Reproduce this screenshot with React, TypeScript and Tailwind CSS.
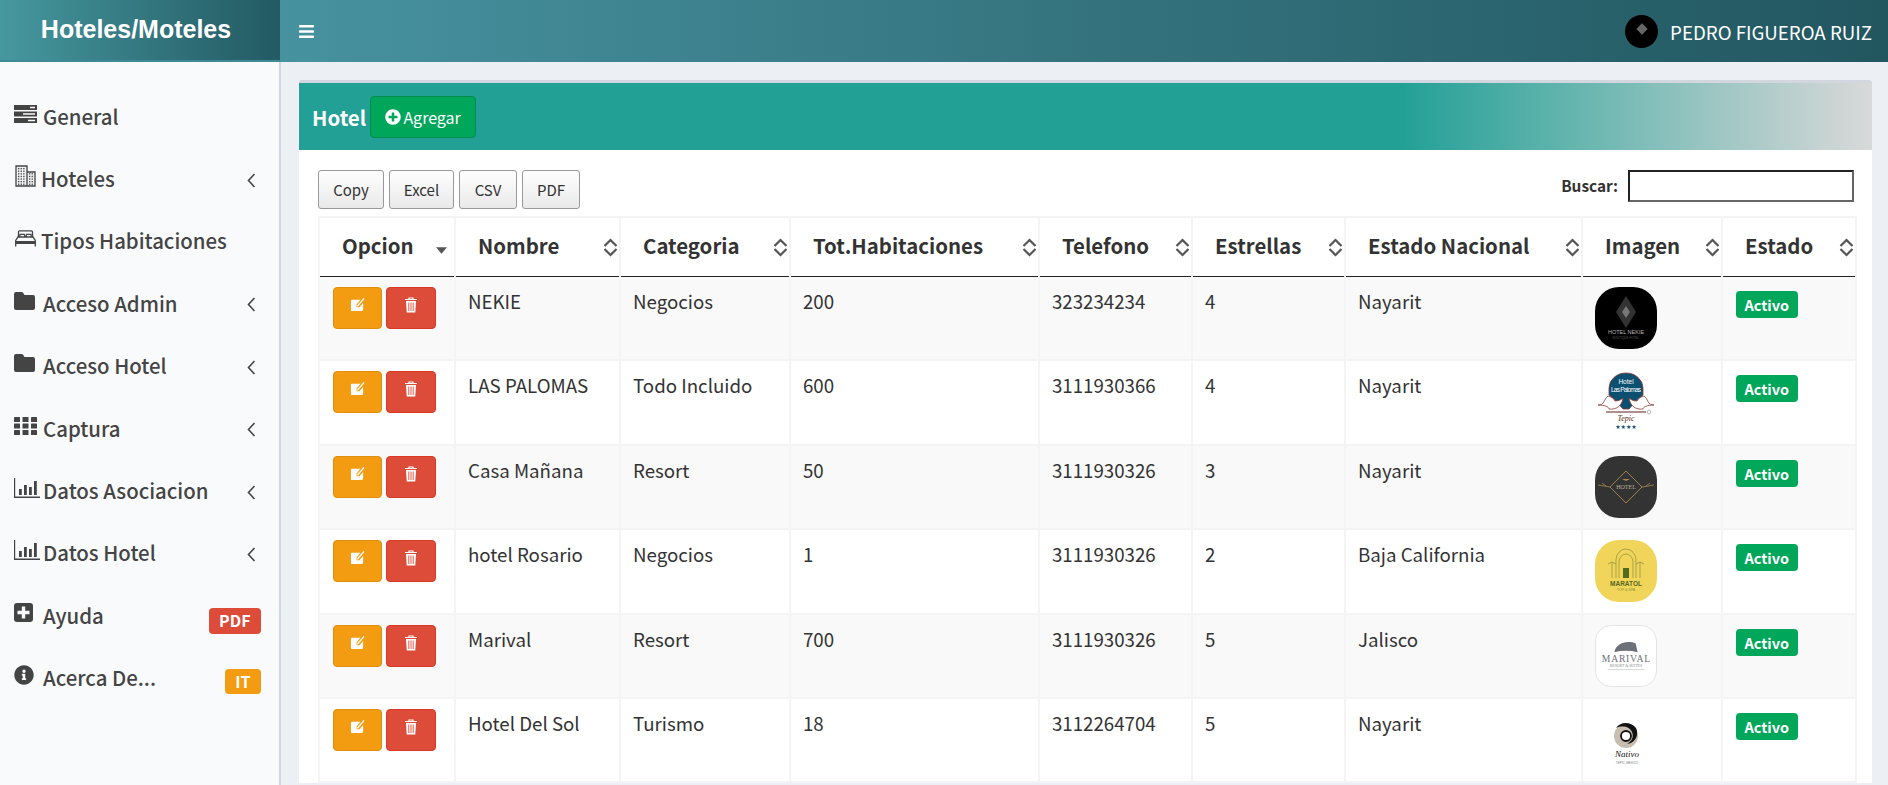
import { FaBars, FaInfoCircle, FaPlusCircle } from "react-icons/fa";
import type { ReactNode } from "react";

function ServerIcon() {
    return (
        <svg viewBox="0 0 23 18" className="h-[18px] w-[23px]" fill="#444">
            <path d="M0 0h23v5H0z" />
            <path d="M0 6.5h23v5H0z" />
            <path d="M0 13h23v5H0z" />
            <path d="M16 1.7h5v1.6h-5zM9 8.2h12v1.6H9zM14 14.7h7v1.6h-7z" fill="#f9fafc" />
        </svg>
    );
}

function BuildingIcon() {
    const dots = [];
    for (let y = 3; y < 19; y += 2.6) {
        for (const x of [3, 5.6, 8.2]) dots.push(<rect key={`a${x}${y}`} x={x} y={y} width="1.3" height="1.3" />);
        if (y > 8) for (const x of [14, 16.6]) dots.push(<rect key={`b${x}${y}`} x={x} y={y} width="1.3" height="1.3" />);
    }
    return (
        <svg viewBox="0 0 21 22" className="h-[22px] w-[21px]" fill="#444">
            <path d="M1 1h11v20H1zM12 7h8v14h-8z" fill="#eef0f2" stroke="#444" strokeWidth="1.3" />
            {dots}
        </svg>
    );
}

function BedIcon() {
    return (
        <svg viewBox="0 0 21 17" className="h-[17px] w-[21px]" fill="none" stroke="#444" strokeWidth="1.3">
            <path d="M3.5 7V2a1.2 1.2 0 0 1 1.2-1.2h11.6A1.2 1.2 0 0 1 17.500 2v5" />
            <path d="M4.500 7l.6-2.600h4.300l.6 2.600M11 7l.6-2.600h4.300l.6 2.600" />
            <path d="M.7 16.500v-6l2.300-3.500h15l2.300 3.500v6" />
            <path d="M.7 11h19.600v3H.7z" fill="#444" stroke="none" />
        </svg>
    );
}

function FolderIcon() {
    return (
        <svg viewBox="0 0 21 18" className="h-[18px] w-[21px]" fill="#444">
            <path d="M2 0h5.500a2 2 0 0 1 1.600.8L10.500 3H19a2 2 0 0 1 2 2v11a2 2 0 0 1-2 2H2a2 2 0 0 1-2-2V2a2 2 0 0 1 2-2z" />
        </svg>
    );
}

function GridIcon() {
    return (
        <svg viewBox="0 0 23 18" className="h-[18px] w-[23px]" fill="#444">
            {[0, 6.500, 13].map((y) =>
                [0, 8.500, 17].map((x) => <rect key={`${x}-${y}`} x={x} y={y} width="6" height="5" rx="0.6" />),
            )}
        </svg>
    );
}

function ChartIcon() {
    return (
        <svg viewBox="0 0 26 20" className="h-[20px] w-[26px]" fill="#444">
            <path d="M0 0h1.200v18.600H26V20H0z" />
            <path d="M5 11h2.800v6H5zM10 7h2.800v10H10zM15 9h2.800v8H15zM20 3h2.800v14H20z" />
        </svg>
    );
}

function PlusSquareIcon() {
    return (
        <svg viewBox="0 0 19 19" className="h-[19px] w-[19px]">
            <rect width="19" height="19" rx="3" fill="#444" />
            <path d="M7.800 3.500h3.400v4.300h4.300v3.400h-4.300v4.300H7.800v-4.300H3.500V7.800h4.300z" fill="#f9fafc" />
        </svg>
    );
}

function Chevron() {
    return (
        <svg viewBox="0 0 9 15" className="h-[15px] w-[9px]" fill="none" stroke="#444" strokeWidth="1.6">
            <path d="M7.500 1L1.500 7.500 7.500 14" />
        </svg>
    );
}

function EditIcon() {
    return (
        <svg viewBox="0 0 16 16" className="h-[15px] w-[15px]">
            <path d="M2 3h9L7 8v3h3l4-4.500V13a2 2 0 0 1-2 2H2a1 1 0 0 1-1-1V4a1 1 0 0 1 1-1z" fill="#fff" />
            <path d="M7.800 9.800L15 1.500" stroke="#fff" strokeWidth="1.500" />
        </svg>
    );
}

function TrashIcon() {
    return (
        <svg viewBox="0 0 14 16" className="h-[16px] w-[14px]">
            <path d="M1 2.500h12M5 2.500V1h4v1.500" stroke="#fff" strokeWidth="1.200" fill="none" />
            <path d="M2 4h10l-.7 11.500H2.700z" fill="#fff" />
            <path d="M4.800 5.500v8.500M7 5.500v8.500M9.200 5.500v8.500" stroke="#dd4b39" strokeWidth="0.9" />
        </svg>
    );
}

function SortIcon() {
    return (
        <svg viewBox="0 0 14 19" className="absolute right-[1.5px] top-[20px] h-[19px] w-[15px]" fill="none" stroke="#555" strokeWidth="2.200">
            <path d="M1 8L7 2l6 6M1 11l6 6 6-6" />
        </svg>
    );
}

function LogoNekie() {
    return (
        <svg viewBox="0 0 62 62" className="h-[62px] w-[62px] rounded-[24px] bg-black">
            <path d="M31 9l10 16-10 16-10-16z" fill="#333" />
            <path d="M31 19l4 6-4 6-4-6z" fill="#777" />
            <text x="31" y="47" textAnchor="middle" fontSize="5.500" fill="#b5b5b5" fontFamily="Liberation Sans">HOTEL NEKIE</text>
            <text x="31" y="52" textAnchor="middle" fontSize="3" fill="#555" fontFamily="Liberation Sans">BOUTIQUE HOTEL</text>
        </svg>
    );
}

function LogoPalomas() {
    return (
        <svg viewBox="0 0 62 62" className="h-[62px] w-[62px]">
            <path d="M14 24V17a17 15 0 0 1 34 0v7l-7 6-7 8h-6l-7-8z" fill="#0b4f71" stroke="#8c3a30" strokeWidth="0.800" />
            <text x="31" y="13" textAnchor="middle" fontSize="6.500" fill="#fff" fontFamily="Liberation Sans">Hotel</text>
            <text x="31" y="21" textAnchor="middle" fontSize="6.500" fill="#fff" fontFamily="Liberation Sans" textLength="30">Las Palomas</text>
            <path d="M3 34c7 0 5-5 10-9 4 1 6 3 7 5 3 0 6-1 8-3-1 8-7 12-14 11 0-2-4-4-11-4zM59 34c-7 0-5-5-10-9-4 1-6 3-7 5-3 0-6-1-8-3 1 8 7 12 14 11 0-2 4-4 11-4z" fill="#fff" stroke="#8c3a30" strokeWidth="0.800" />
            <path d="M11 41h40" stroke="#5a1e18" strokeWidth="1" />
            <circle cx="54" cy="41" r="1.800" fill="none" stroke="#888" strokeWidth="0.600" />
            <text x="31" y="50" textAnchor="middle" fontSize="8" fontStyle="italic" fill="#5a1e18" fontFamily="Liberation Serif">Tepic</text>
            <text x="31" y="58" textAnchor="middle" fontSize="6" fill="#0b4f71" fontFamily="DejaVu Sans">★★★★</text>
        </svg>
    );
}

function LogoCasa() {
    return (
        <svg viewBox="0 0 62 62" className="h-[62px] w-[62px] rounded-[24px] bg-[#333333]">
            <path d="M31 15l16 16-16 16-16-16z" fill="none" stroke="#a98a4f" strokeWidth="0.900" />
            <path d="M3 29l12 2M59 29l-12 2M7 27l4 3M55 27l-4 3" stroke="#a98a4f" strokeWidth="0.800" />
            <path d="M27 23h8l-4 2z" fill="#a98a4f" />
            <text x="31" y="33" textAnchor="middle" fontSize="6" fill="#b9b09a" fontFamily="Liberation Serif">HOTEL</text>
        </svg>
    );
}

function LogoMaratol() {
    return (
        <svg viewBox="0 0 62 62" className="h-[62px] w-[62px] rounded-[24px] bg-[#f1d55a]">
            <path d="M21 38V20a10 11 0 0 1 20 0v18M24 38V22a7 8 0 0 1 14 0v16" fill="none" stroke="#8a8f3d" strokeWidth="0.700" />
            <path d="M28 28h6v10h-6z" fill="#55691f" />
            <path d="M17 38V22M45 38V22M13 24l4-2 4 2M41 24l4-2 4 2" fill="none" stroke="#8a8f3d" strokeWidth="0.700" />
            <text x="31" y="46" textAnchor="middle" fontSize="6.500" fontWeight="700" fill="#55691f" fontFamily="Liberation Sans">MARATOL</text>
            <text x="31" y="51" textAnchor="middle" fontSize="3.500" fill="#8a8f3d" fontFamily="Liberation Sans">TOP &amp; SPA</text>
        </svg>
    );
}

function LogoMarival() {
    return (
        <svg viewBox="0 0 62 62" className="h-[62px] w-[62px] rounded-[16px] border border-[#e4e4e4] bg-white">
            <path d="M19 27c1-9 13-13 22-9l2 9c-8-2-16-2-24 0z" fill="#6c7078" />
            <text x="31" y="37" textAnchor="middle" fontSize="10" fill="#6c7078" fontFamily="Liberation Serif" textLength="50">MARIVAL</text>
            <text x="31" y="42" textAnchor="middle" fontSize="4" fill="#888" fontFamily="Liberation Serif">RESORT &amp; SUITES</text>
            <path d="M12 45h38" stroke="#ccc" strokeWidth="0.800" />
        </svg>
    );
}

function LogoNativo() {
    return (
        <svg viewBox="0 0 62 62" className="h-[62px] w-[62px]">
            <circle cx="31" cy="27" r="12" fill="#c9bdb0" />
            <path d="M21 19c5-7 15-6 20 0 3 6 0 15-9 16 5-3 7-7 5-12-2-5-9-7-16-4z" fill="#111" />
            <circle cx="31" cy="27" r="5" fill="#fff" stroke="#111" strokeWidth="1.800" />
            <text x="32" y="48" textAnchor="middle" fontSize="9" fontStyle="italic" fill="#111" fontFamily="Liberation Serif">Nativo</text>
            <text x="32" y="55" textAnchor="middle" fontSize="3" fill="#777" fontFamily="Liberation Sans">TEPIC, MEXICO</text>
        </svg>
    );
}

const menu: { label: string; icon: ReactNode; w: string; arrow?: boolean; badge?: string; badgeColor?: string; badgeMt?: string }[] = [
    { label: "General", icon: <ServerIcon />, w: "w-[29px]" },
    { label: "Hoteles", icon: <BuildingIcon />, w: "w-[27px] pl-[1px]", arrow: true },
    { label: "Tipos Habitaciones", icon: <BedIcon />, w: "w-[27px] pl-[1px]" },
    { label: "Acceso Admin", icon: <FolderIcon />, w: "w-[29px]", arrow: true },
    { label: "Acceso Hotel", icon: <FolderIcon />, w: "w-[29px]", arrow: true },
    { label: "Captura", icon: <GridIcon />, w: "w-[29px]", arrow: true },
    { label: "Datos Asociacion", icon: <ChartIcon />, w: "w-[29px]", arrow: true },
    { label: "Datos Hotel", icon: <ChartIcon />, w: "w-[29px]", arrow: true },
    { label: "Ayuda", icon: <PlusSquareIcon />, w: "w-[29px]", badge: "PDF", badgeColor: "bg-[#dd4b39]", badgeMt: "mt-[12px]" },
    { label: "Acerca De...", icon: <FaInfoCircle className="h-[20px] w-[20px] text-[#444]" />, w: "w-[29px]", badge: "IT", badgeColor: "bg-[#f39c12]", badgeMt: "mt-[9px]" },
];

const columns = [
    { label: "Nombre", w: "w-[165px]" },
    { label: "Categoria", w: "w-[170px]" },
    { label: "Tot.Habitaciones", w: "w-[249px]" },
    { label: "Telefono", w: "w-[153px]" },
    { label: "Estrellas", w: "w-[153px]" },
    { label: "Estado Nacional", w: "w-[237px]" },
    { label: "Imagen", w: "w-[140px]" },
    { label: "Estado", w: "w-[134px]" },
];

const rows = [
    { nombre: "NEKIE", cat: "Negocios", hab: "200", tel: "323234234", est: "4", edo: "Nayarit", logo: <LogoNekie /> },
    { nombre: "LAS PALOMAS", cat: "Todo Incluido", hab: "600", tel: "3111930366", est: "4", edo: "Nayarit", logo: <LogoPalomas /> },
    { nombre: "Casa Mañana", cat: "Resort", hab: "50", tel: "3111930326", est: "3", edo: "Nayarit", logo: <LogoCasa /> },
    { nombre: "hotel Rosario", cat: "Negocios", hab: "1", tel: "3111930326", est: "2", edo: "Baja California", logo: <LogoMaratol /> },
    { nombre: "Marival", cat: "Resort", hab: "700", tel: "3111930326", est: "5", edo: "Jalisco", logo: <LogoMarival /> },
    { nombre: "Hotel Del Sol", cat: "Turismo", hab: "18", tel: "3112264704", est: "5", edo: "Nayarit", logo: <LogoNativo /> },
];

const exportButtons = [
    { label: "Copy", w: "w-[66px]" },
    { label: "Excel", w: "w-[65px]" },
    { label: "CSV", w: "w-[58px]" },
    { label: "PDF", w: "w-[58px]" },
];

const td = "border-x-2 border-b-2 border-[#f4f4f4] px-[12px] pb-0 pt-[10px] align-top";
const th = "relative border-x-2 border-t-2 border-b border-[#f4f4f4] border-b-[#222] pb-[4px] pl-[22px] text-left text-[20.4px] font-bold leading-[28px]";

export default function App() {
    return (
        <div className="flex h-[785px] flex-col overflow-hidden bg-[#ecf0f5] font-['Noto_Sans_CJK_SC','Source_Sans_Pro',sans-serif] text-[#333]">
            {/* Top bar */}
            <header className="flex h-[62px] shrink-0">
                <div className="flex h-[62px] w-[280px] items-start justify-center border-b-2 border-[#3f8a96] bg-gradient-to-r from-[#46989f] to-[#235a63] pr-[8px] pt-[11px] font-['Liberation_Sans',sans-serif] text-[25px] font-bold leading-[36px] text-white">
                    Hoteles/Moteles
                </div>
                <div className="flex flex-1 items-center justify-between bg-gradient-to-r from-[#47929f] to-[#225760] pl-[18px] pr-[16px]">
                    <FaBars className="h-[17px] w-[17px] text-white" />
                    <div className="flex items-center gap-[12px]">
                        <div className="flex h-[33px] w-[33px] items-center justify-center rounded-full bg-black pb-[4px]">
                            <div className="h-[8px] w-[8px] rotate-45 bg-[#666]" />
                        </div>
                        <span className="text-[18.7px] leading-[25px] text-white">PEDRO FIGUEROA RUIZ</span>
                    </div>
                </div>
            </header>

            <div className="flex min-h-0 flex-1">
                {/* Sidebar */}
                <aside className="flex w-[281px] shrink-0 flex-col border-r-2 border-[#d2d6de] bg-[#f9fafc] pt-[22.5px]">
                    {menu.map((item) => (
                        <div key={item.label} className="flex h-[62.4px] shrink-0 items-center pl-[14px] pr-[18px] text-[#444]">
                            <span className={`flex shrink-0 -translate-y-[2px] items-center ${item.w}`}>{item.icon}</span>
                            <span className="whitespace-nowrap text-[20.4px] font-medium leading-[30px]">{item.label}</span>
                            {item.arrow && (
                                <span className="ml-auto mr-[5px] mt-[4px] flex">
                                    <Chevron />
                                </span>
                            )}
                            {item.badge && (
                                <span className={`ml-auto ${item.badgeMt} rounded-[4px] px-[10.5px] text-[16px] font-bold leading-[25.5px] text-white ${item.badgeColor}`}>
                                    {item.badge}
                                </span>
                            )}
                        </div>
                    ))}
                </aside>

                {/* Main */}
                <main className="min-w-0 flex-1 pl-[18px] pr-[16px] pt-[18px]">
                    <section className="rounded-t-[3px] border-t-[3px] border-[#d2d6de] bg-white">
                        <div className="flex h-[67px] items-center bg-[linear-gradient(to_right,#22a096_0%,#22a096_70%,#d9d9d9_100%)] pl-[13px]">
                            <h1 className="text-[20.4px] font-bold leading-[30px] text-white">Hotel</h1>
                            <button className="ml-[4px] flex h-[42px] w-[106px] items-center justify-center gap-[2px] rounded-[4px] border border-[#008d4c] bg-[#00a65a] text-[16px] leading-[24px] text-white">
                                <FaPlusCircle className="h-[16px] w-[16px]" />
                                Agregar
                            </button>
                        </div>

                        <div className="pl-[19px] pr-[18px] pt-[20px]">
                            <div className="flex items-start justify-between">
                                <div className="flex gap-[5px]">
                                    {exportButtons.map((b) => (
                                        <button
                                            key={b.label}
                                            className={`h-[39px] rounded-[3px] border border-[#999] bg-gradient-to-b from-white to-[#e9e9e9] text-[15px] leading-[20px] text-[#333] ${b.w}`}
                                        >
                                            {b.label}
                                        </button>
                                    ))}
                                </div>
                                <label className="flex items-start gap-[10px]">
                                    <span className="mt-[4px] text-[15.4px] font-bold leading-[22px]">Buscar:</span>
                                    <input className="h-[32px] w-[226px] border-2 border-b-[#666] border-l-[#222] border-r-[#666] border-t-[#222] bg-white" />
                                </label>
                            </div>

                            <table className="mt-[7px] w-[1537px] table-fixed border-collapse text-[18.7px] leading-[26px]">
                                <colgroup>
                                    <col className="w-[136px]" />
                                    {columns.map((c) => (
                                        <col key={c.label} className={c.w} />
                                    ))}
                                </colgroup>
                                <thead>
                                    <tr className="h-[59px]">
                                        <th className={th}>
                                            Opcion
                                            <svg viewBox="0 0 12 7" className="absolute right-[7px] top-[29px] h-[7px] w-[11px]" fill="#555">
                                                <path d="M0 0h12L6 7z" />
                                            </svg>
                                        </th>
                                        {columns.map((c) => (
                                            <th key={c.label} className={th}>
                                                {c.label}
                                                <SortIcon />
                                            </th>
                                        ))}
                                    </tr>
                                </thead>
                                <tbody>
                                    {rows.map((r, i) => (
                                        <tr key={r.nombre} className={`h-[84.4px] ${i % 2 === 0 ? "bg-[#f9f9f9]" : "bg-white"}`}>
                                            <td className={td}>
                                                <div className="flex gap-[4px] pl-[1px]">
                                                    <button className="flex h-[42px] w-[49px] justify-center rounded-[4px] border border-[#e08e0b] bg-[#f39c12] pt-[9px]">
                                                        <EditIcon />
                                                    </button>
                                                    <button className="flex h-[42px] w-[50px] justify-center rounded-[4px] border border-[#d73925] bg-[#dd4b39] pt-[9px]">
                                                        <TrashIcon />
                                                    </button>
                                                </div>
                                            </td>
                                            <td className={`${td} pt-[11px]`}>{r.nombre}</td>
                                            <td className={`${td} pt-[11px]`}>{r.cat}</td>
                                            <td className={`${td} pt-[11px]`}>{r.hab}</td>
                                            <td className={`${td} pt-[11px]`}>{r.tel}</td>
                                            <td className={`${td} pt-[11px]`}>{r.est}</td>
                                            <td className={`${td} pt-[11px]`}>{r.edo}</td>
                                            <td className={td}>{r.logo}</td>
                                            <td className={td}>
                                                <span className="ml-[1px] mt-[4px] inline-block rounded-[4px] bg-[#00a65a] px-[8.5px] text-[14.5px] font-bold leading-[27px] text-white">
                                                    Activo
                                                </span>
                                            </td>
                                        </tr>
                                    ))}
                                </tbody>
                            </table>
                        </div>
                    </section>
                </main>
            </div>
        </div>
    );
}
